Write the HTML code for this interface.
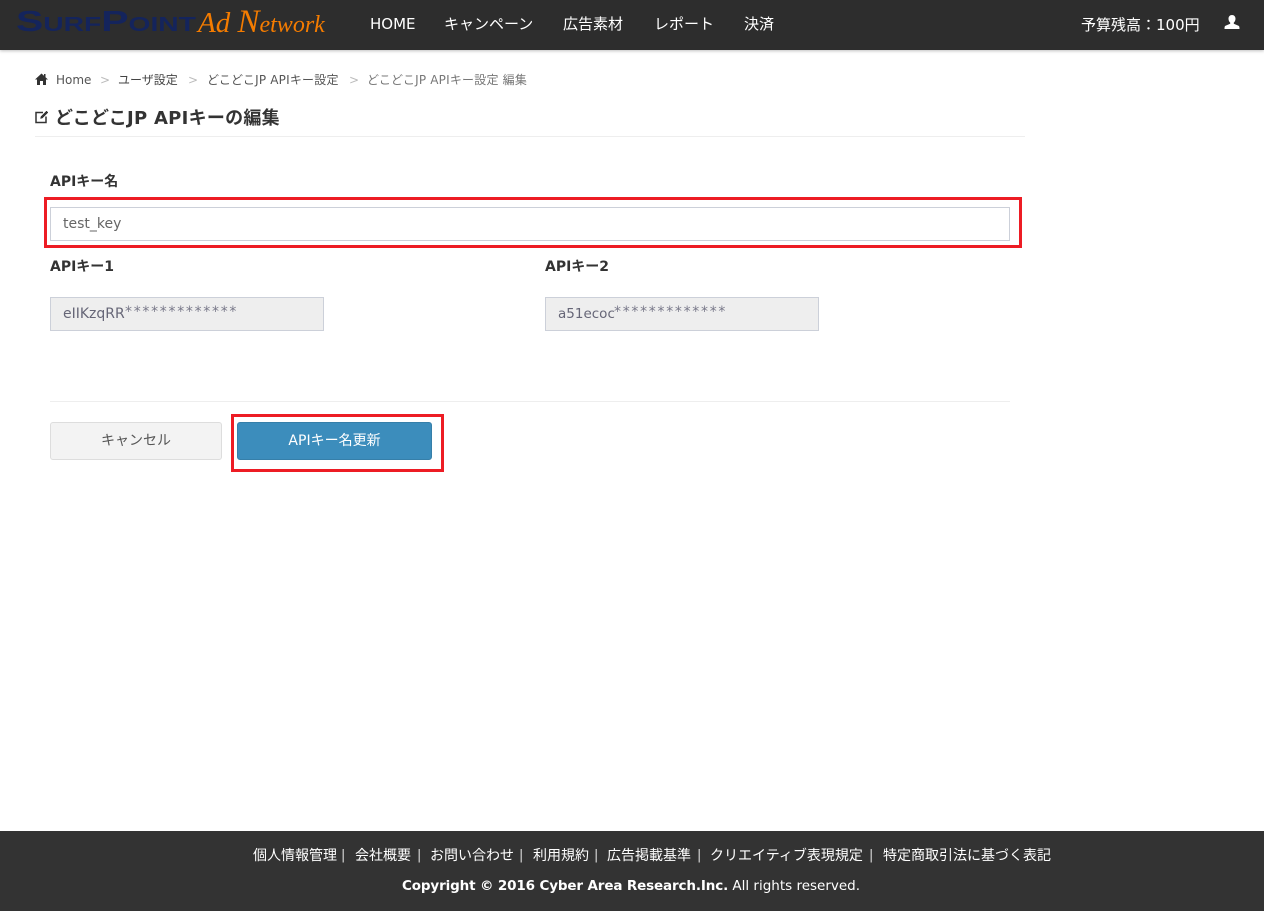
<!DOCTYPE html>
<html lang="ja">
<head>
<meta charset="utf-8">
<title>どこどこJP APIキーの編集</title>
<style>
html,body{margin:0;padding:0;background:#fff}
body{width:1264px;height:911px;position:relative;overflow:hidden;font-family:"DejaVu Sans","Noto Sans CJK JP",sans-serif;color:#333}
.a{position:absolute;white-space:nowrap;line-height:20px}
.hdr{position:absolute;left:0;top:0;width:1264px;height:50px;background:#2d2d2d;box-shadow:0 1px 3px rgba(0,0,0,.25)}
.ftr{position:absolute;left:0;top:831px;width:1264px;height:80px;background:#333}
.nav{color:#fff;font-size:15px;top:14px}
.bc{font-size:12px;top:70px;color:#444;letter-spacing:.2px}
.sep{font-size:12px;top:70px;color:#bbb}
.lbl{font-size:14px;font-weight:bold;color:#333}
.box{position:absolute;box-sizing:border-box;border:1px solid #ccd0d9}
.red{position:absolute;box-sizing:border-box;border:3px solid #ed1c24}
.f{color:#fff;font-size:14px;top:846px}
.b{color:#ddd;font-size:13px;top:846px}
.mask{font-size:14px;color:#667;top:304px}
.star{font-size:14px;color:#778;letter-spacing:1.7px;top:302px}
</style>
</head>
<body>
<div class="hdr"></div>
<div class="a" style="left:16px;top:10px;font:bold 20px/24px 'Liberation Sans',sans-serif;color:#14245c;transform-origin:0 0;transform:scaleX(1.41)"><span style="font-size:29px">S</span>URF<span style="font-size:29px">P</span>OINT</div>
<div class="a" style="left:198px;top:8px;font:italic 29px/28px 'Liberation Serif',serif;color:#f57c00">Ad <span style="font-size:33px">N</span><span style="font-size:24px">etwork</span></div>
<div class="a nav" style="left:370px">HOME</div>
<div class="a nav" style="left:444px">キャンペーン</div>
<div class="a nav" style="left:563px">広告素材</div>
<div class="a nav" style="left:654px">レポート</div>
<div class="a nav" style="left:744px">決済</div>
<div class="a nav" style="left:1081px;top:15px">予算残高：100円</div>
<svg style="position:absolute;left:1224px;top:15px" width="16" height="15" viewBox="0 0 16 15"><path d="M8 0C5.800 0 4.500 1.600 4.500 3.800C4.500 5.400 5.200 6.800 6.200 7.600V8.800L1.500 10.800C.7 11.200.5 12 .5 14H15.500C15.500 12 15.300 11.200 14.500 10.800L9.800 8.800V7.600C10.800 6.800 11.500 5.400 11.500 3.800C11.500 1.600 10.200 0 8 0Z" fill="#fff"/></svg>

<svg style="position:absolute;left:35px;top:73px" width="13" height="12" viewBox="0 0 13 12"><path d="M6.500 .5L0 6.500H2V12H5V8H8V12H11V6.500H13L10.500 4.200V1H9V2.800Z" fill="#333"/></svg>
<div class="a bc" style="left:56px;color:#555;letter-spacing:0">Home</div>
<div class="a sep" style="left:100px">&gt;</div>
<div class="a bc" style="left:118px;letter-spacing:0">ユーザ設定</div>
<div class="a sep" style="left:188px">&gt;</div>
<div class="a bc" style="left:207px;color:#555">どこどこJP APIキー設定</div>
<div class="a sep" style="left:349px">&gt;</div>
<div class="a bc" style="left:367px;color:#777">どこどこJP APIキー設定 編集</div>

<svg style="position:absolute;left:35px;top:110px" width="14" height="14" viewBox="0 0 14 14" fill="none" stroke="#333" stroke-width="1.500"><path d="M8 2.500H1V12.500H11V6.500"/><path d="M5.500 8.500L6 6.500L11.500 1L13 2.500L7.500 8Z" fill="#333" stroke-width=".5"/></svg>
<div class="a" style="left:55px;top:109px;font-size:18px;font-weight:bold;color:#333;letter-spacing:.27px">どこどこJP APIキーの編集</div>
<div style="position:absolute;left:35px;top:136px;width:990px;height:1px;background:#eee"></div>

<div class="a lbl" style="left:50px;top:172px">APIキー名</div>
<div class="red" style="left:44px;top:197px;width:978px;height:51px"></div>
<div class="box" style="left:50px;top:207px;width:960px;height:34px;background:#fff"></div>
<div class="a" style="left:63px;top:214px;font-size:14px;color:#666">test_key</div>

<div class="a lbl" style="left:50px;top:257px">APIキー1</div>
<div class="box" style="left:50px;top:297px;width:274px;height:34px;background:#eee"></div>
<div class="a mask" style="left:63px">eIIKzqRR</div>
<div class="a star" style="left:125px">*************</div>

<div class="a lbl" style="left:545px;top:257px">APIキー2</div>
<div class="box" style="left:545px;top:297px;width:274px;height:34px;background:#eee"></div>
<div class="a mask" style="left:558px;font-size:13.500px">a51ecoc</div>
<div class="a star" style="left:614px">*************</div>

<div style="position:absolute;left:50px;top:401px;width:960px;height:1px;background:#eee"></div>

<div style="position:absolute;box-sizing:border-box;left:50px;top:422px;width:172px;height:38px;background:#f3f3f3;border:1px solid #ddd;border-radius:3px;text-align:center;font-size:14px;line-height:37px;color:#555">キャンセル</div>
<div class="red" style="left:231px;top:414px;width:213px;height:58px"></div>
<div style="position:absolute;box-sizing:border-box;left:237px;top:422px;width:195px;height:38px;background:#3c8dbc;border:1px solid #367fa9;border-radius:3px;text-align:center;font-size:14px;line-height:37px;color:#fff">APIキー名更新</div>

<div class="ftr"></div>
<div class="a f" style="left:253px">個人情報管理</div><div class="a b" style="left:341px">|</div>
<div class="a f" style="left:355px">会社概要</div><div class="a b" style="left:417px">|</div>
<div class="a f" style="left:430px">お問い合わせ</div><div class="a b" style="left:519px">|</div>
<div class="a f" style="left:533px">利用規約</div><div class="a b" style="left:594px">|</div>
<div class="a f" style="left:607px">広告掲載基準</div><div class="a b" style="left:697px">|</div>
<div class="a f" style="left:710px">クリエイティブ表現規定</div><div class="a b" style="left:869px">|</div>
<div class="a f" style="left:883px">特定商取引法に基づく表記</div>
<div class="a" style="left:402px;top:876px;font-size:13.500px;color:#fff"><b style="letter-spacing:-.14px">Copyright © 2016 Cyber Area Research.Inc.</b> All rights reserved.</div>
</body>
</html>
